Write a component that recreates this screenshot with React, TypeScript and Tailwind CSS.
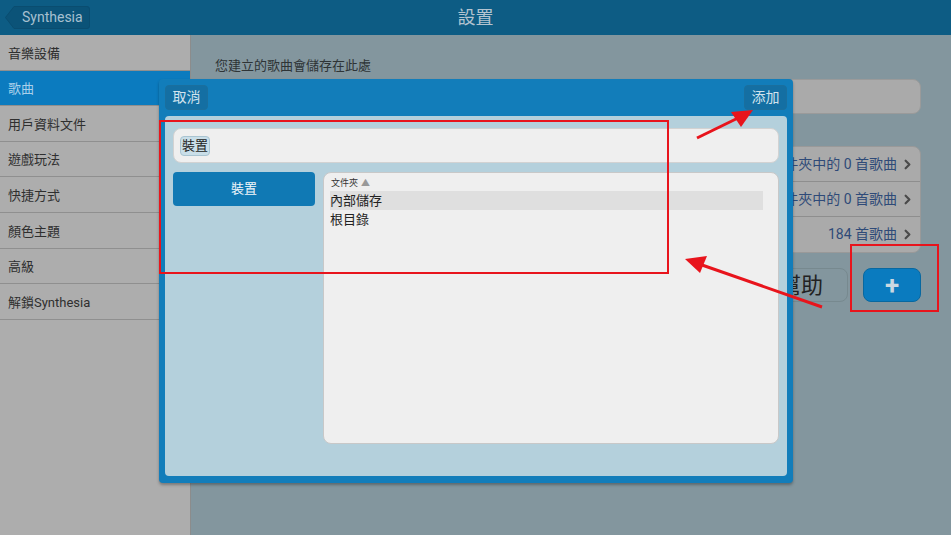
import { ChevronRight } from 'lucide-react'

const MENU = ['音樂設備', '歌曲', '用戶資料文件', '遊戲玩法', '快捷方式', '顏色主題', '高級', '解鎖Synthesia']

const SONG_ROWS = ['內部儲存文件夾中的 0 首歌曲', 'SD卡文件夾中的 0 首歌曲', '184 首歌曲']

function BackButton() {
  return (
    <div className="relative ml-[5px] h-[23px] w-[85px]">
      <svg className="absolute inset-0" width="85" height="23" viewBox="0 0 85 23">
        <path d="M0.5 11.5 L9 0.5 H82 Q84.5 0.5 84.5 3 V20 Q84.5 22.5 82 22.5 H9 Z" fill="#0b5378" stroke="#0a4d70" />
      </svg>
      <span className="relative flex h-full items-center pl-[17px] text-[14px] text-[#a7c0d0]">Synthesia</span>
    </div>
  )
}

export default function App() {
  return (
    <div className="relative h-[535px] w-[951px] overflow-hidden bg-[#83969e] font-['Roboto','Noto_Sans_CJK_TC',sans-serif]">
      {/* top bar */}
      <div className="grid h-[35px] grid-cols-[1fr_auto_1fr] items-center bg-[#0d5c84]">
        <BackButton />
        <span className="text-[18px] text-[#b3c4d0]">設置</span>
        <span />
      </div>

      <div className="flex h-[500px]">
        {/* sidebar */}
        <div className="w-[191px] shrink-0 border-r border-[#8c8c8c] bg-[#adadad]">
          {MENU.map((item, i) => (
            <div
              key={item}
              className={
                i === 1
                  ? 'flex h-[35.6px] items-center border-b border-[#8f8f8f] bg-[#0b7bbf] pl-[8px] pt-[2px] text-[13px] text-[#a9d0ea]'
                  : 'flex h-[35.6px] items-center border-b border-[#8f8f8f] pl-[8px] pt-[2px] text-[13px] text-[#2f2f2f]'
              }
            >
              {item}
            </div>
          ))}
        </div>

        {/* main */}
        <div className="flex flex-1 flex-col pl-[24px] pr-[30px] pt-[21px]">
          <p className="h-[23px] text-[13px] text-[#2e3436]">您建立的歌曲會儲存在此處</p>
          <div className="h-[35px] rounded-lg border border-[#9a9a9a] bg-[#aaaaaa]" />

          <div className="mt-[32px] flex flex-col rounded-lg border border-[#999] bg-[#aaaaaa]">
            {SONG_ROWS.map((row, i) => (
              <div
                key={row}
                className={
                  i < 2
                    ? 'flex h-[35px] items-center justify-end gap-[3px] border-b border-[#8e8e8e] pr-[5px] text-[14px] text-[#2f4a78]'
                    : 'flex h-[35px] items-center justify-end gap-[3px] pr-[5px] text-[14px] text-[#2f4a78]'
                }
              >
                {row}
                <ChevronRight className="h-[15px] w-[15px] text-[#4a4a4a]" strokeWidth={3.5} />
              </div>
            ))}
          </div>

          <div className="mt-[15px] flex justify-end gap-[15px]">
            <div className="flex h-[34px] w-[94px] items-center justify-center rounded-lg border border-[#77898f] text-[22px] text-[#222]">
              幫助
            </div>
            <div className="flex h-[34px] w-[58px] items-center justify-center rounded-lg border border-[#0868a0] bg-[#0a7bbf] text-[26px] font-bold leading-none text-[#c9d8e2]">
              +
            </div>
          </div>
        </div>
      </div>

      {/* dialog */}
      <div className="absolute left-[159px] top-[79px] flex h-[404px] w-[634px] flex-col rounded-sm bg-[#127dba] px-[6px] pb-[7px] shadow-[0_2px_3px_rgba(0,0,0,0.3)]">
        <div className="flex h-[37px] items-center justify-between">
          <div className="flex h-[25px] w-[43px] items-center justify-center rounded-sm border border-[#1a6f9e] bg-[#146fa3] text-[14px] text-[#d2e3ee]">
            取消
          </div>
          <div className="flex h-[25px] w-[43px] items-center justify-center rounded-sm border border-[#1a6f9e] bg-[#146fa3] text-[14px] text-[#d2e3ee]">
            添加
          </div>
        </div>
        <div className="flex flex-1 flex-col rounded-sm bg-[#b4d0dc] px-[8px] pb-[32px] pt-[12px]">
          <div className="flex h-[35px] items-center rounded-lg border border-[#d2d2d2] bg-[#efefef] pl-[6px]">
            <span className="rounded-sm border border-[#a9c4d1] bg-[#c9dee8] px-[1px] text-[13px] leading-[18px] text-[#222]">裝置</span>
          </div>
          <div className="mt-[9px] flex flex-1 gap-[8px]">
            <div className="w-[142px]">
              <div className="flex h-[34px] items-center justify-center rounded-sm bg-[#1079b4] text-[13px] text-[#f2f7fa]">裝置</div>
            </div>
            <div className="flex-1 rounded-lg border border-[#c8c8c8] bg-[#efefef] px-[6px] pt-[4px]">
              <div className="flex items-center gap-[3px] pl-[1px] text-[9px] text-[#333]">
                文件夾
                <span className="text-[9px] text-[#999]">▲</span>
              </div>
              <div className="mr-[9px] h-[19px] bg-[#dfdfdf] text-[13px] leading-[19px] text-[#222]">內部儲存</div>
              <div className="h-[19px] text-[13px] leading-[19px] text-[#222]">根目錄</div>
            </div>
          </div>
        </div>
      </div>

      {/* annotations */}
      <div className="absolute left-[159px] top-[120px] h-[154px] w-[510px] border-2 border-[#e8141c]" />
      <div className="absolute left-[850px] top-[244px] h-[68px] w-[89px] border-2 border-[#e8141c]" />
      <svg className="pointer-events-none absolute inset-0" width="951" height="535" viewBox="0 0 951 535">
        <line x1="697" y1="138" x2="738" y2="118" stroke="#e8141c" strokeWidth="3" />
        <polygon points="753,110 731,112 741,127" fill="#e8141c" />
        <line x1="822" y1="307" x2="702" y2="265" stroke="#e8141c" strokeWidth="3" />
        <polygon points="685,259 707,256 700,273" fill="#e8141c" />
      </svg>
    </div>
  )
}
